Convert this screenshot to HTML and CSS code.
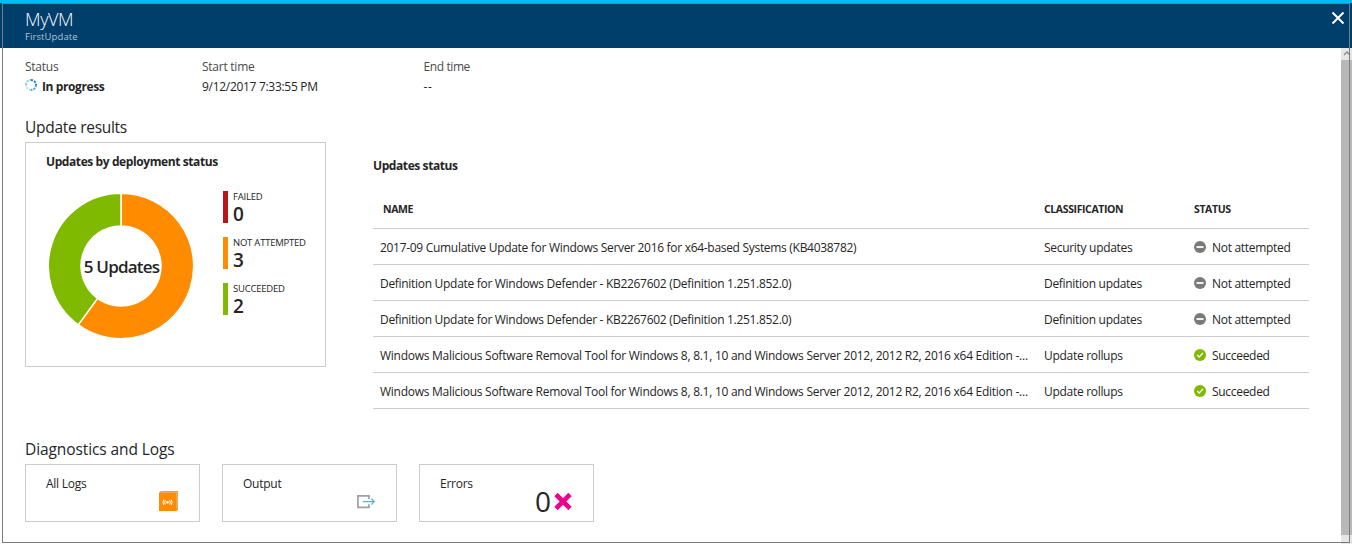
FILE: index.html
```html
<!DOCTYPE html>
<html lang="en">
<head>
<meta charset="utf-8">
<title>MyVM - FirstUpdate</title>
<link rel="stylesheet" href="styles.css">
</head>
<body>
<div class="blade">
  <header class="header">
    <div>
      <h1 class="title"><span>MyVM</span></h1>
      <div class="subtitle"><span>FirstUpdate</span></div>
    </div>
    <svg class="close" width="14" height="14" viewBox="0 0 14 14"><path d="M1.5 1.5l11 11M12.5 1.5l-11 11" stroke="#fff" stroke-width="2" fill="none"/></svg>
  </header>
  <div class="body">
    <main class="content">
      <section class="facts">
        <div class="fact fact-status"><div class="label"><span>Status</span></div>
          <div class="value progress">
            <svg class="spinner" width="12" height="12" viewBox="0 0 12 12" fill="none" stroke-width="2"><g stroke-dasharray="2.1 1.04"><path d="M6 1a5 5 0 0 1 5 5" stroke="#1c7cc4"/><path d="M11 6a5 5 0 0 1-5 5" stroke="#4fa3dd"/><path d="M6 11a5 5 0 0 1-5-5" stroke="#c0def3"/><path d="M1 6a5 5 0 0 1 5-5" stroke="#8cc4e8"/></g></svg>
            <span>In progress</span></div></div>
        <div class="fact fact-start"><div class="label"><span>Start time</span></div><div class="value date"><span>9/12/2017 7:33:55 PM</span></div></div>
        <div class="fact"><div class="label end"><span>End time</span></div><div class="value dashes"><span>--</span></div></div>
      </section>
      <h2 class="heading results-heading"><span>Update results</span></h2>
      <section class="results">
        <div class="card chart-card">
          <h3 class="subheading"><span>Updates by deployment status</span></h3>
          <div class="chart-row">
            <div class="donut">
              <svg width="146" height="146" viewBox="-73 -73 146 146">
                <g stroke="#fff" stroke-width="1.5">
                  <path fill="#ff8c00" d="M0-72.7A72.7 72.7 0 1 1-42.73 58.82L-23.51 32.36A40 40 0 1 0 0-40Z"/>
                  <path fill="#7fba00" d="M0-72.7A72.7 72.7 0 0 0-42.73 58.82L-23.51 32.36A40 40 0 0 1 0-40Z"/>
                </g>
              </svg>
              <div class="donut-label"><span>5 Updates</span></div>
            </div>
            <ul class="legend">
              <li class="failed"><small>FAILED</small><b>0</b></li>
              <li class="pending"><small>NOT ATTEMPTED</small><b>3</b></li>
              <li class="done"><small>SUCCEEDED</small><b>2</b></li>
            </ul>
          </div>
        </div>
        <div class="updates">
          <h3 class="subheading status-heading"><span>Updates status</span></h3>
          <div class="row head"><div class="name"><span>NAME</span></div><div class="class"><span>CLASSIFICATION</span></div><div class="state"><span>STATUS</span></div></div>
          <div class="row"><div class="name"><span>2017-09 Cumulative Update for Windows Server 2016 for x64-based Systems (KB4038782)</span></div><div class="class"><span>Security updates</span></div><div class="state"><svg width="12" height="12" viewBox="0 0 12 12"><circle cx="6" cy="6" r="6" fill="#7a7a7a"/><path d="M2.5 6h7" stroke="#fff" stroke-width="1.8"/></svg><span>Not attempted</span></div></div>
          <div class="row"><div class="name"><span>Definition Update for Windows Defender - KB2267602 (Definition 1.251.852.0)</span></div><div class="class"><span>Definition updates</span></div><div class="state"><svg width="12" height="12" viewBox="0 0 12 12"><circle cx="6" cy="6" r="6" fill="#7a7a7a"/><path d="M2.5 6h7" stroke="#fff" stroke-width="1.8"/></svg><span>Not attempted</span></div></div>
          <div class="row"><div class="name"><span>Definition Update for Windows Defender - KB2267602 (Definition 1.251.852.0)</span></div><div class="class"><span>Definition updates</span></div><div class="state"><svg width="12" height="12" viewBox="0 0 12 12"><circle cx="6" cy="6" r="6" fill="#7a7a7a"/><path d="M2.5 6h7" stroke="#fff" stroke-width="1.8"/></svg><span>Not attempted</span></div></div>
          <div class="row"><div class="name long"><span>Windows Malicious Software Removal Tool for Windows 8, 8.1, 10 and Windows Server 2012, 2012 R2, 2016 x64 Edition -...</span></div><div class="class"><span>Update rollups</span></div><div class="state"><svg width="12" height="12" viewBox="0 0 12 12"><circle cx="6" cy="6" r="6" fill="#7fba00"/><path d="M3.2 6.1l2 2 3.8-4.2" stroke="#fff" stroke-width="1.4" fill="none"/></svg><span>Succeeded</span></div></div>
          <div class="row"><div class="name long"><span>Windows Malicious Software Removal Tool for Windows 8, 8.1, 10 and Windows Server 2012, 2012 R2, 2016 x64 Edition -...</span></div><div class="class"><span>Update rollups</span></div><div class="state"><svg width="12" height="12" viewBox="0 0 12 12"><circle cx="6" cy="6" r="6" fill="#7fba00"/><path d="M3.2 6.1l2 2 3.8-4.2" stroke="#fff" stroke-width="1.4" fill="none"/></svg><span>Succeeded</span></div></div>
        </div>
      </section>
      <h2 class="heading logs-heading"><span>Diagnostics and Logs</span></h2>
      <section class="tiles">
        <div class="card tile"><div class="tile-name"><span>All Logs</span></div>
          <div class="tile-icon"><svg width="20" height="20" viewBox="0 0 20 20"><path d="M0 2L2 0h17v18.500l-1.500 1.500H0z" fill="#ff8c00"/><path d="M1.500 1.400H17.600V18.500l.9-1V.8H2.300z" fill="#d8c9b4"/><path d="M0 2h16.800v18H0z" fill="#ff8c00"/><circle cx="8.500" cy="11.300" r="1.200" fill="#fff"/><path d="M6.300 9.200q-1.200 2 0 4.200M10.700 9.200q1.200 2 0 4.200M4.800 8.600q-1.700 2.700 0 5.400M12.200 8.600q1.700 2.700 0 5.400" fill="none" stroke="#fff" stroke-width="1"/></svg></div></div>
        <div class="card tile"><div class="tile-name"><span>Output</span></div>
          <div class="tile-icon"><svg width="20" height="20" viewBox="0 0 20 20"><path d="M13 8V4.800H1.900v11.600H13v-3.200" fill="none" stroke="#a0a0a0" stroke-width="1.700"/><path d="M6.700 10.600h11.500M15.300 7.600l3 3-3 3" fill="none" stroke="#59b4d9" stroke-width="1.300"/></svg></div></div>
        <div class="card tile"><div class="tile-name"><span>Errors</span></div>
          <div class="tile-icon"><span class="count">0</span><svg width="20" height="20" viewBox="0 0 20 20"><path d="M3 3.500l14 14M17 3.500l-14 14" stroke="#ec008c" stroke-width="4.600" fill="none"/></svg></div></div>
      </section>
    </main>
    <div class="scrollbar"><div class="arrow"><svg width="8" height="5" viewBox="0 0 8 5"><path d="M1 4l3-3 3 3" fill="none" stroke="#8c8c8c" stroke-width="1.4"/></svg></div><div class="thumb"></div><div class="arrow arrow-end"></div></div>
  </div>
</div>
<div class="frame"></div>
</body>
</html>
```
FILE: styles.css
```css
* { box-sizing: border-box; }
body { margin: 0; background: #fff; color: #252525; font-family: "Open Sans", "Noto Sans", sans-serif; font-size: 12px; overflow: hidden; }
h1, h2, h3, ul { margin: 0; padding: 0; font-weight: 400; list-style: none; }
svg { display: block; flex: none; }
.blade { width: 1352px; height: 544px; display: flex; flex-direction: column; border-top: 3px solid #00bcf2; }
.header { height: 45px; flex: none; background: #003e6c; display: flex; justify-content: space-between; padding: 4px 7px 0 25px; color: #fff; }
.title { font-size: 18px; line-height: 24px; letter-spacing: -.4px; font-weight: 300; }
.subtitle { font-size: 9.5px; line-height: 12px; color: #b3c5d3; letter-spacing: .1px; }
.close { margin-top: 4px; }
.body { flex: 1; display: flex; min-height: 0; }
.content { flex: 1; padding: 9px 0 0 25px; }
.facts { display: flex; height: 60px; }
.fact-status { width: 177px; }
.fact-start { width: 221.5px; }
.label, .value { line-height: 20px; letter-spacing: -.25px; }
.label { color: #4a4a4a; }
.value.date { letter-spacing: -.3px; }
.label.end { letter-spacing: -.4px; }
.value.dashes { letter-spacing: .6px; }
.progress { display: flex; gap: 5px; font-weight: 700; }
.value.progress { letter-spacing: -.4px; }
.spinner { margin-top: 2px; }
.heading { font-size: 15.5px; line-height: 20px; letter-spacing: -.28px; }
.results { display: flex; height: 272px; margin-top: 5px; }
.card { border: 1px solid #ccc; }
.chart-card { width: 301px; height: 225px; padding: 9px 0 0 20px; }
.subheading { font-size: 12px; font-weight: 700; line-height: 20px; letter-spacing: -.41px; }
.chart-row { display: flex; margin-left: 2px; }
.donut { display: grid; width: 146px; height: 146px; margin-top: 21px; }
.donut svg, .donut-label { grid-area: 1 / 1; }
.donut-label { place-self: center; font-size: 17px; font-weight: 600; letter-spacing: -.8px; white-space: nowrap; padding: 1px 0 0 1px; }
.legend { margin: 19px 0 0 29px; }
.legend li { height: 32px; margin-bottom: 14px; padding-left: 5px; border-left: 5px solid; display: flex; flex-direction: column; }
.legend small { font-size: 9.5px; line-height: 12px; letter-spacing: -.22px; color: #252525; white-space: nowrap; }
.legend b { font-size: 19px; line-height: 23px; font-weight: 600; color: #252525; }
.legend .failed { border-color: #ba141a; }
.legend .pending { border-color: #ff8c00; }
.legend .done { border-color: #7fba00; }
.updates { width: 936px; margin-left: 47px; }
.status-heading { margin-top: 14px; height: 33px; }
.row { display: flex; align-items: center; height: 36px; border-bottom: 1px solid #ccc; letter-spacing: -.3px; padding-top: 1px; }
.row.head { height: 40px; font-weight: 700; font-size: 10.5px; padding-top: 0; letter-spacing: -.38px; }
.name { width: 671px; padding-left: 7px; white-space: nowrap; }
.name.long { letter-spacing: -.265px; }
.head .name { padding-left: 10px; }
.class { width: 150px; }
.state { display: flex; align-items: center; gap: 6px; }
.logs-heading { margin-top: 25px; letter-spacing: -.1px; }
.tiles { display: flex; gap: 22px; margin-top: 5px; }
.tile { width: 175px; height: 58px; padding: 9px 20px 0; }
.tile-name { line-height: 20px; letter-spacing: -.25px; }
.tile-icon { display: flex; justify-content: flex-end; align-items: center; height: 20px; margin-top: -3px; gap: 1px; }
.count { font-size: 28px; line-height: 20px; margin-right: 1px; }
.scrollbar { width: 11px; background: #b8b8b8; display: flex; flex-direction: column; }
.arrow { height: 12px; background: #e6e6e6; padding: 3px 0 0 2px; }
.thumb { flex: 1; }
.arrow-end { height: 9px; }
/* Window outline drawn over the header and scrollbar */
.frame { position: absolute; left: 2px; top: 3px; width: 1348px; height: 540px; border: 1px solid #7c7c7c; pointer-events: none; }
```
